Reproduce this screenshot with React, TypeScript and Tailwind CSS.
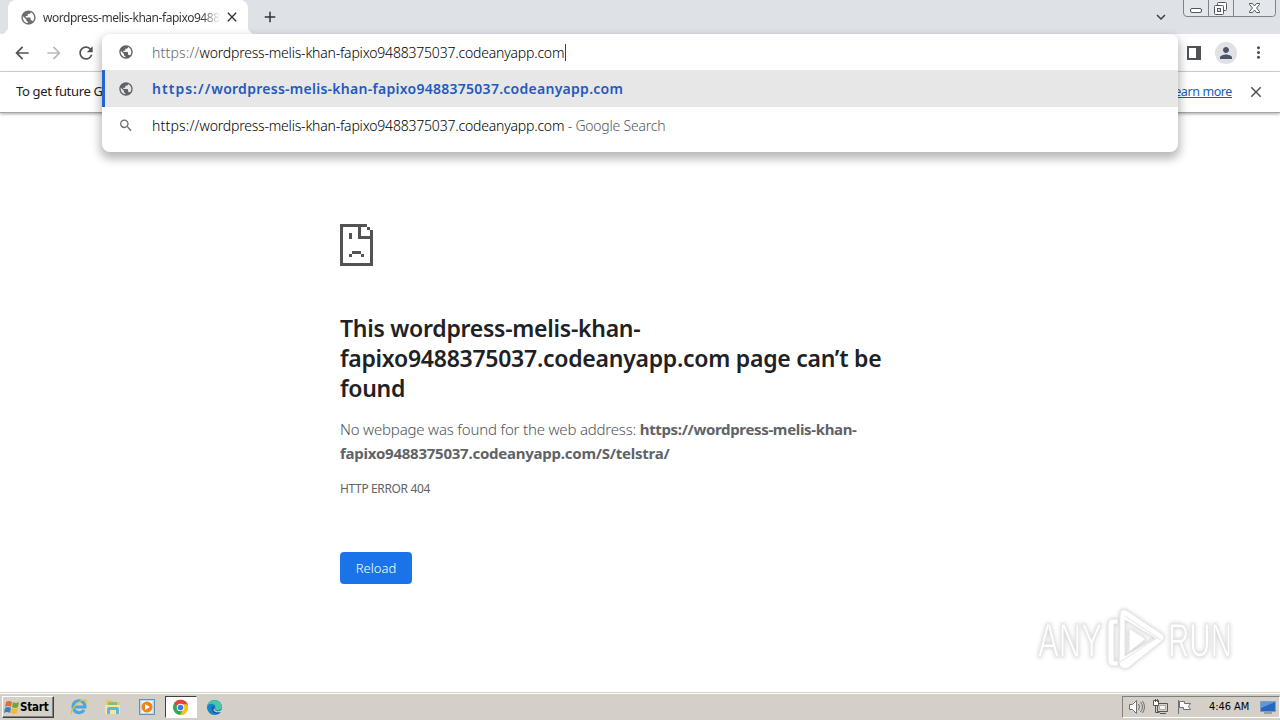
import type { ReactNode } from 'react';
import { MdArrowBack, MdArrowForward, MdClose, MdAdd, MdPublic, MdRefresh, MdSearch, MdKeyboardArrowDown, MdPerson, MdMoreVert } from 'react-icons/md';

const HOST = 'wordpress-melis-khan-fapixo9488375037.codeanyapp.com';

function WindowButtons() {
  return (
    <svg width="94" height="18" viewBox="0 0 94 18" fill="none" className="shrink-0">
      <path d="M.5 0v13q0 3.500 3.500 3.500h85.500q3 0 3-3V0" fill="#e3e6ea" stroke="#7f848c" />
      <path d="M25.500 0v16M50.500 0v16" stroke="#7f848c" />
      <rect x="7.500" y="8.500" width="11" height="4" rx="1.500" fill="#fff" stroke="#53575e" />
      <rect x="34.500" y="2.500" width="9" height="8" rx="1" fill="#fff" stroke="#53575e" />
      <rect x="31.500" y="5.500" width="9" height="9" rx="1" fill="#fff" stroke="#53575e" />
      <rect x="34.500" y="8.500" width="3" height="3" fill="#dee1e6" stroke="#53575e" />
      <path d="M66.500 3.500h3l2 2.500 2-2.500h3v1l-3 3.500 3 3.500v1h-3l-2-2.500-2 2.500h-3v-1l3-3.500-3-3.500z" fill="#fff" stroke="#53575e" />
    </svg>
  );
}

function TabStrip() {
  return (
    <div className="flex h-[34px] items-start bg-[#dee1e6]">
      <div className="relative ml-2 flex h-[34px] w-60 items-center rounded-t-lg bg-white pl-3 pr-2">
        <MdPublic className="h-[17px] w-[17px] shrink-0 text-[#6b6f74]" />
        <span className="mt-px ml-1.5 w-[177px] overflow-hidden whitespace-nowrap bg-linear-to-r from-[#303336] from-90% to-transparent bg-clip-text text-[12px] tracking-[-0.46px] text-transparent">
          {HOST}
        </span>
        <MdClose className="ml-1 h-4 w-4 shrink-0 text-[#303336]" />
        <span className="absolute bottom-0 -left-2 h-2 w-2 bg-[radial-gradient(circle_at_0_0,#dee1e6_8px,#fff_8.500px)]" />
        <span className="absolute -right-2 bottom-0 h-2 w-2 bg-[radial-gradient(circle_at_100%_0,#dee1e6_8px,#fff_8.500px)]" />
      </div>
      <MdAdd className="mt-2 ml-[13px] h-[18px] w-[18px] text-[#303338]" />
      <div className="ml-auto flex items-start">
        <MdKeyboardArrowDown className="mt-2 mr-[13px] h-[18px] w-[18px] text-[#3c4043]" />
        <WindowButtons />
        <span className="w-[3px]" />
      </div>
    </div>
  );
}

function Toolbar() {
  return (
    <div className="flex h-[38px] items-center border-b border-[#d5d7da] bg-white pl-3">
      <MdArrowBack className="h-5 w-5 text-[#505356]" />
      <MdArrowForward className="ml-3 h-5 w-5 text-[#b8babd]" />
      <MdRefresh className="ml-3 h-5 w-5 text-[#505356]" />
      <div className="ml-auto flex items-center pr-3">
        <svg width="14" height="14" viewBox="0 0 14 14" className="mr-3.5">
          <path d="M1 1h12v12H1z" fill="none" stroke="#505356" strokeWidth="2" />
          <path d="M9 1h4v12H9z" fill="#505356" />
        </svg>
        <span className="mr-3 flex h-[22px] w-[22px] items-center justify-center rounded-full bg-[#dfe1e5]">
          <MdPerson className="h-[18px] w-[18px] text-[#4a5468]" />
        </span>
        <MdMoreVert className="h-[19px] w-[19px] text-[#505356]" />
      </div>
    </div>
  );
}

function InfoBar() {
  return (
    <div className="relative z-10 flex h-[41px] items-center border-b border-[#a4a4a4] bg-white pr-[15px] pl-4 text-[13px] text-[#202124] shadow-[0_1px_3px_rgba(0,0,0,0.35)]">
      <span className="tracking-[-0.32px]">To get future Google Chrome updates, you'll need Windows 10 or later.</span>
      <a className="ml-auto text-[12.500px] tracking-[-0.4px] text-[#1a5bb8] underline">Learn more</a>
      <MdClose className="ml-[15px] h-[18px] w-[18px] text-[#505356]" />
    </div>
  );
}

function Suggestion({ icon, active, children }: { icon: ReactNode; active?: boolean; children: ReactNode }) {
  return (
    <div className={`flex h-[37px] items-center border-l-3 pl-[13px] ${active ? 'border-[#2563d0] bg-[#e7e7e7]' : 'border-transparent'}`}>
      {icon}
      <span className="ml-[18px] whitespace-nowrap text-[14px]">{children}</span>
    </div>
  );
}

function Omnibox() {
  const globe = <MdPublic className="h-4 w-4 text-[#5f6368]" />;
  return (
    <div className="absolute top-[34px] left-[102px] z-20 h-[118px] w-[1076px] overflow-hidden rounded-lg bg-white text-black shadow-[0_5px_10px_2px_rgba(0,0,0,0.28)]">
      <div className="flex h-9 items-center pl-4">
        {globe}
        <span className="ml-[18px] whitespace-nowrap text-[14px] font-light tracking-[-0.2px]">
          <span className="tracking-[0.2px] text-[#62656a]">https://</span>{HOST}
        </span>
        <span className="ml-px h-[17px] w-px bg-[#404040]" />
      </div>
      <Suggestion icon={globe} active>
        <span className="font-semibold tracking-[0.27px] text-[#2359be]">
          <span className="tracking-[1.03px]">https://</span>{HOST}
        </span>
      </Suggestion>
      <Suggestion icon={<MdSearch className="h-[17px] w-4 text-[#6b6e72]" />}>
        <span className="font-light tracking-[-0.2px]"><span className="tracking-[0.2px]">https://</span>{HOST}</span>
        <span className="font-light tracking-[-0.22px] text-[#55585c]"> - Google Search</span>
      </Suggestion>
    </div>
  );
}

function SadPage() {
  return (
    <svg width="33" height="42" viewBox="0 0 11 14" fill="#535353" shapeRendering="crispEdges">
      <path d="M0 0h9v1H7v3h3V2h1v12H0zM1 1v12h9V5H6V1z" fillRule="evenodd" />
      <path d="M9 1h1v1H9zM3 3h1v2H3zM4 9h3v1H4zM3 10h1v1H3zM7 10h1v1H7z" />
    </svg>
  );
}

function AnyRunLogo() {
  return (
    <svg width="200" height="66" viewBox="0 0 200 66" className="absolute top-[493px] left-[1035px] overflow-visible drop-shadow-[0_0_2px_rgba(0,0,0,0.2)]" fill="#fff" stroke="#e4e4e4" strokeWidth="1">
      <text x="3" y="51" fontSize="48" textLength="64" lengthAdjust="spacingAndGlyphs" fontFamily="Liberation Sans, sans-serif">ANY</text>
      <path d="M79 13q-6 0-6 5v36q0 6 6 6h4v-5h-4V18h4V13z" />
      <path d="M85 8q0-6 6-4l36 24q4 3 0 7L93 62q-5 2-8-2l-1-3zM90 14v36l30-18z" fillRule="evenodd" />
      <path d="M85 56l37-24M90 10l36 24" fill="none" />
      <path d="M94 22l17 11-17 13z" />
      <text x="133" y="51" fontSize="48" textLength="64" lengthAdjust="spacingAndGlyphs" fontFamily="Liberation Sans, sans-serif">RUN</text>
    </svg>
  );
}

function ErrorPage() {
  return (
    <main className="relative flex-1 bg-white pt-[111px] pl-[340px] text-[#5f6368]">
      <SadPage />
      <h1 className="mt-[47px] w-[600px] text-[23px] leading-[30px] font-semibold tracking-[-0.26px] text-[#202124]">
        This wordpress-melis-khan-
        <br />
        fapixo9488375037.codeanyapp.com page can’t be
        <br />
        found
      </h1>
      <p className="mt-[14px] w-[600px] text-[15px] leading-6">
        <span className="font-light tracking-[-0.19px] text-[#505458]">No webpage was found for the web address: </span>
        <b className="tracking-[-0.34px]">https://wordpress-melis-khan-</b>
        <br />
        <b className="tracking-[-0.24px]">fapixo9488375037.codeanyapp.com/S/telstra/</b>
      </p>
      <div className="mt-[13px] text-[12px] leading-[22px] tracking-[-0.36px]">HTTP ERROR 404</div>
      <button className="mt-[52px] h-8 w-[72px] rounded bg-[#1a73e8] pt-px text-[13px] font-light text-white">Reload</button>
      <AnyRunLogo />
    </main>
  );
}

function StartFlag() {
  return (
    <svg width="17" height="16" viewBox="0 0 17 16">
      <path d="M3 2q3-2 6 0L8 7Q5 5 2 7z" fill="#df6e32" />
      <path d="M10 2q3 2 6 0l-1 5q-3 2-6 0z" fill="#70a832" />
      <path d="M2 8q3-2 6 0l-1 5q-3-2-6 0z" fill="#3b7ec5" />
      <path d="M9 8q3 2 6 0l-1 5q-3 2-6 0z" fill="#f0ba32" />
    </svg>
  );
}

function TaskIcons() {
  return (
    <div className="flex items-center">
      <svg width="18" height="18" viewBox="0 0 18 18" fill="none" className="ml-4">
        <path d="M14 12a6 6 0 1 1 1-3H5" stroke="#46a8dc" strokeWidth="3" />
        <path d="M2 16C-1 13 10 1 15 2q2 0 1 4" stroke="#e8bb46" strokeWidth="1.300" />
      </svg>
      <svg width="18" height="18" viewBox="0 0 18 18" className="ml-4">
        <path d="M2 2h6l1 2h7v12H2z" fill="#e7c768" />
        <path d="M4 4h9v3H4z" fill="#8abd79" />
        <path d="M1 7h15v9H1z" fill="#f7e59b" />
        <path d="M3 16v-5q0-2 2-2h8q2 0 2 2v5h-3v-4H6v4z" fill="#62b5d5" />
      </svg>
      <svg width="18" height="18" viewBox="0 0 18 18" className="ml-4">
        <rect x="1.500" y="1.500" width="15" height="15" fill="#b7d8ef" stroke="#6490bd" />
        <rect x="3.500" y="3" width="11" height="12" fill="#f4f7fa" />
        <circle cx="9" cy="9" r="5.500" fill="#ee861d" />
        <path d="M7 6l5 3-5 3z" fill="#fff" />
      </svg>
      <span className="ml-[9px] flex h-[22px] w-8 items-center justify-center border border-[#404040] border-r-white border-b-white bg-white pr-px">
        <svg width="17" height="17" viewBox="0 0 18 18">
          <circle cx="9" cy="9" r="8" fill="#35a853" />
          <path d="M9 9L2 5a8 8 0 0 1 14.900 2z" fill="#e64235" />
          <path d="M9 5.500h7.200A8 8 0 0 1 8.500 17L12.500 10z" fill="#fbc116" />
          <circle cx="9" cy="9" r="4" fill="#fff" />
          <circle cx="9" cy="9" r="3" fill="#397ee8" />
        </svg>
      </span>
      <svg width="17" height="17" viewBox="0 0 18 18" className="ml-[9px]">
        <circle cx="9" cy="9" r="8" fill="#1683ce" />
        <path d="M1 8C2-1 16-1 17 8q0 4-5 4-3 0-2-3 0-4-4-4-4 0-5 3" fill="#49c5a8" />
        <path d="M6 8q-1 7 6 8 3 0 4-3-3 1-5 0-3-1-2-5" fill="#155ca7" />
        <path d="M9 9q-1 3 3 4 3 0 5-2v3h-4q-5 0-5-3z" fill="#d4d0c8" />
      </svg>
    </div>
  );
}

function Tray() {
  return (
    <div className="ml-auto flex h-[22px] w-[158px] items-center border border-[#808080] border-r-white border-b-white pr-[3px] pl-[5px]">
      <svg width="17" height="16" viewBox="0 0 17 16" fill="none" stroke="#707070">
        <path d="M1.500 5.500h3l4-4v13l-4-4h-3z" fill="#fff" />
        <path d="M10.500 5q2 3 0 6M12.500 3q4 5 0 10M14.500 2q4 6 0 12" />
      </svg>
      <svg width="17" height="16" viewBox="0 0 17 16" fill="none" stroke="#555" className="ml-[7px]">
        <path d="M5.500 4.500h10v8h-10z" fill="#d4d0c8" />
        <path d="M7.500 6.500h6v4h-6z" fill="#f4f4f4" stroke="#aaa" />
        <path d="M8 14.500h6M3.500 7v6.500h4" />
        <path d="M1.500 1.500h5v5h-5zM3.500 0v3M5.500 0v3" fill="#fff" />
      </svg>
      <svg width="17" height="16" viewBox="0 0 17 16" fill="#fff" stroke="#707070" className="ml-[7px]">
        <path d="M2.500 1v14M3.500 2.500h5v2h6l-2 3 2 3h-7v-2h-4z" />
      </svg>
      <span className="ml-4 font-['DejaVu_Sans_Condensed','DejaVu_Sans',sans-serif] text-[11px] tracking-[-0.05px] whitespace-nowrap text-black">4:46 AM</span>
      <svg width="16" height="14" viewBox="0 0 16 14" className="ml-auto">
        <path d="M.5 1.500h15v10H.5z" fill="#2469bd" stroke="#7f9fc4" />
        <path d="M1 2h14L1 8z" fill="#5d99da" />
        <path d="M4 13h8" stroke="#5b6e83" />
      </svg>
    </div>
  );
}

function Taskbar() {
  return (
    <footer className="flex h-7 items-center border-t border-[#d4d0c8] bg-[#d4d0c8] pt-px shadow-[inset_0_1px_0_#fff]">
      <button className="ml-0.5 flex h-[22px] w-[52px] items-center border border-white border-r-[#404040] border-b-[#404040] pt-px font-['DejaVu_Sans_Condensed','DejaVu_Sans',sans-serif] text-[11.500px] font-bold tracking-[-0.2px] text-black shadow-[inset_-1px_-1px_0_#808080]">
        <StartFlag />
        <span>Start</span>
      </button>
      <TaskIcons />
      <Tray />
    </footer>
  );
}

export default function App() {
  return (
    <div className="relative flex h-[720px] w-[1280px] flex-col overflow-hidden bg-white font-['Noto_Sans',sans-serif]">
      <TabStrip />
      <Toolbar />
      <InfoBar />
      <ErrorPage />
      <Taskbar />
      <Omnibox />
    </div>
  );
}
